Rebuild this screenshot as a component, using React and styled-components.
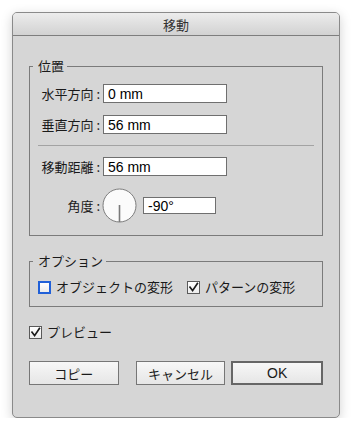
import styled, { createGlobalStyle } from 'styled-components'

const GlobalStyle = createGlobalStyle`
  html, body {
    margin: 0;
    padding: 0;
    background: #ffffff;
  }
  body {
    font-family: "Noto Sans CJK JP", "Liberation Sans", sans-serif;
    color: #1a1a1a;
  }
`

const jp = `"Noto Sans CJK JP", sans-serif`
const latin = `"Liberation Sans", Arial, sans-serif`

const CheckMark = () => (
  <svg width='11' height='11' viewBox='0 0 11 11'>
    <path
      d='M2 5.2 L4.6 8.6 L9.4 1.4'
      fill='none'
      stroke='#1a1a1a'
      strokeWidth='1.7'
      strokeLinecap='square'
    />
  </svg>
)

const Check = ({ checked, focused, children }) => (
  <CheckItem>
    <Box $focused={focused}>{checked && <CheckMark />}</Box>
    <span>{children}</span>
  </CheckItem>
)

const App = () => {
  return (
    <>
      <GlobalStyle />
      <Page>
        <Window>
          <TitleBar>移動</TitleBar>
          <Body>
            <Group>
              <Legend>位置</Legend>
              <Rows>
                <Row>
                  <Label>水平方向 :</Label>
                  <Field>0 mm</Field>
                </Row>
                <Row>
                  <Label>垂直方向 :</Label>
                  <Field>56 mm</Field>
                </Row>
                <Separator />
                <Row>
                  <Label>移動距離 :</Label>
                  <Field>56 mm</Field>
                </Row>
                <Row>
                  <Label>角度 :</Label>
                  <AngleBox>
                    <Dial>
                      <svg width='35' height='35' viewBox='0 0 35 35'>
                        <circle
                          cx='17.5'
                          cy='17.5'
                          r='16.5'
                          fill='#fbfbfb'
                          stroke='#7d7d7d'
                          strokeWidth='1'
                        />
                        <line
                          x1='17.5'
                          y1='17'
                          x2='17.5'
                          y2='34'
                          stroke='#7a7a7a'
                          strokeWidth='1.6'
                        />
                      </svg>
                    </Dial>
                    <Field $small>-90°</Field>
                  </AngleBox>
                </Row>
              </Rows>
            </Group>

            <Group $options>
              <Legend>オプション</Legend>
              <Options>
                <Check focused>オブジェクトの変形</Check>
                <Check checked>パターンの変形</Check>
              </Options>
            </Group>

            <Preview>
              <Check checked>プレビュー</Check>
            </Preview>

            <Buttons>
              <Button>コピー</Button>
              <Button>キャンセル</Button>
              <Button $default>OK</Button>
            </Buttons>
          </Body>
        </Window>
      </Page>
    </>
  )
}

export default App

const Page = styled.div`
  padding: 12px 0 0 12px;
`

const Window = styled.div`
  width: 328px;
  height: 406px;
  box-sizing: border-box;
  border: 1px solid #8a8a8a;
  border-radius: 5px;
  background: #d6d6d6;
  box-shadow: 0 3px 12px rgba(0, 0, 0, 0.18);
  display: flex;
  flex-direction: column;
  overflow: hidden;
`

const TitleBar = styled.div`
  height: 21px;
  flex: none;
  border-bottom: 1px solid #7e7e7e;
  background: linear-gradient(#ececec, #d2d2d2);
  display: flex;
  align-items: center;
  justify-content: center;
  font-family: ${jp};
  font-size: 13px;
  color: #333;
  padding-top: 1px;
  box-sizing: content-box;
`

const Body = styled.div`
  display: flex;
  flex-direction: column;
  padding: 22px 16px 0 16px;
`

const Group = styled.fieldset`
  margin: ${p => (p.$options ? '17px 0 0' : '0')};
  padding: ${p => (p.$options ? '11px 8px 12px' : '10px 8px 12px')};
  border: 1px solid #7b7b7b;
  min-width: 0;
`

const Legend = styled.legend`
  margin-left: -5px;
  padding: 0 3px 0 5px;
  font-family: ${jp};
  font-size: 13px;
  line-height: 16px;
  color: #1a1a1a;
`

const Rows = styled.div`
  display: flex;
  flex-direction: column;
  gap: 12px;
`

const Row = styled.div`
  display: grid;
  grid-template-columns: 62px auto;
  column-gap: 3px;
  align-items: center;
`

const Label = styled.span`
  font-family: ${jp};
  font-size: 13px;
  line-height: 16px;
  text-align: right;
  white-space: pre;
  color: #1a1a1a;
`

const Field = styled.div`
  width: ${p => (p.$small ? '73px' : '124px')};
  height: ${p => (p.$small ? '17px' : '19px')};
  box-sizing: border-box;
  border: 1px solid #6f6f6f;
  background: #ffffff;
  padding-left: 4px;
  font-family: ${latin};
  font-size: 14px;
  line-height: ${p => (p.$small ? '16px' : '18px')};
  color: #000;
`

const Separator = styled.div`
  height: 1px;
  background: #a3a3a3;
  margin: -1px 0;
`

const AngleBox = styled.div`
  display: flex;
  align-items: center;
  gap: 6px;
`

const Dial = styled.div`
  width: 35px;
  height: 35px;
  margin-left: -1px;
  display: flex;
`

const Options = styled.div`
  display: flex;
  gap: 14px;
  align-items: center;
`

const CheckItem = styled.label`
  display: flex;
  align-items: center;
  gap: 5px;
  font-family: ${jp};
  font-size: 13px;
  line-height: 14px;
  color: #1a1a1a;
`

const Box = styled.span`
  width: 13px;
  height: 13px;
  box-sizing: border-box;
  border: ${p => (p.$focused ? '2px solid #2060d8' : '1px solid #5a5a5a')};
  background: linear-gradient(#ffffff, #ececec);
  display: flex;
  align-items: center;
  justify-content: center;
`

const Preview = styled.div`
  margin-top: 18px;
  display: flex;
`

const Buttons = styled.div`
  margin-top: 22px;
  display: flex;
  align-items: center;
`

const Button = styled.button`
  width: ${p => (p.$default ? '92px' : '90px')};
  height: 24px;
  margin-left: ${p => (p.$default ? '6px' : '0')};
  margin-right: ${p => (p.$default ? '0' : '17px')};
  border: ${p => (p.$default ? '2px solid #666666' : '1px solid #767676')};
  border-radius: 0;
  background: linear-gradient(#f7f7f7, #e6e6e6);
  font-family: ${p => (p.$default ? latin : jp)};
  font-size: ${p => (p.$default ? '14px' : '13px')};
  color: #1a1a1a;
  padding: 0;
  &:nth-child(2) {
    margin-right: 0;
  }
`
